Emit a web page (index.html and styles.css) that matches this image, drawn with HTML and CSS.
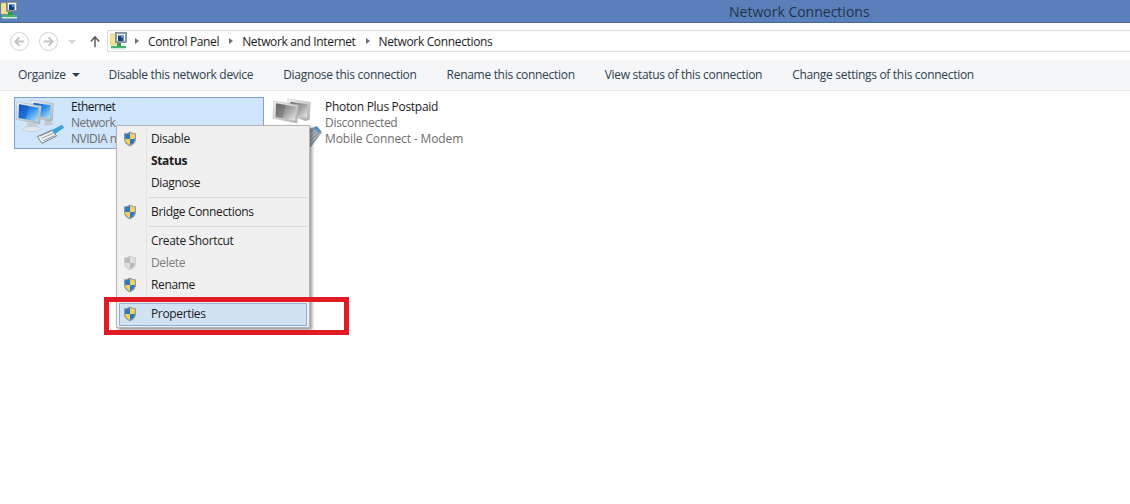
FILE: index.html
```html
<!DOCTYPE html>
<html lang="en">
<head>
<meta charset="utf-8">
<title>Network Connections</title>
<link rel="stylesheet" href="styles.css">
</head>
<body>
<svg class="defs" width="0" height="0" aria-hidden="true">
  <defs>
    <linearGradient id="gScreen" x1="0" y1="0" x2="1" y2="1">
      <stop offset="0" stop-color="#0f55c8"/>
      <stop offset=".5" stop-color="#2f8fea"/>
      <stop offset="1" stop-color="#c4e8fc"/>
    </linearGradient>
    <linearGradient id="gFrame" x1="0" y1="0" x2="1" y2="1">
      <stop offset="0" stop-color="#f4f6f8"/>
      <stop offset="1" stop-color="#a8b2ba"/>
    </linearGradient>
    <linearGradient id="gScreenGrey" x1="0" y1="0" x2="1" y2="1">
      <stop offset="0" stop-color="#6e6e6e"/>
      <stop offset=".55" stop-color="#a6a6a6"/>
      <stop offset="1" stop-color="#ececec"/>
    </linearGradient>
    <linearGradient id="gFrameGrey" x1="0" y1="0" x2="1" y2="1">
      <stop offset="0" stop-color="#f4f4f4"/>
      <stop offset="1" stop-color="#acacac"/>
    </linearGradient>
    <symbol id="shield" viewBox="0 0 14 16">
      <path d="M7 .5C5 1.800 3 2.300 1 2.300v5.500c0 3.600 2.400 6.200 6 7.700 3.600-1.500 6-4.100 6-7.700V2.300C11 2.300 9 1.800 7 .5z" fill="#8d9aa6"/>
      <path d="M7 1.800V8H2.200V3.300C3.800 3.200 5.500 2.800 7 1.800z" fill="#2f78bf"/>
      <path d="M7 1.800V8h4.800V3.300C10.200 3.200 8.500 2.800 7 1.800z" fill="#f2d35a"/>
      <path d="M2.200 8H7v6.100C4.200 12.800 2.300 10.800 2.200 8z" fill="#f2d35a"/>
      <path d="M11.800 8H7v6.100c2.800-1.300 4.700-3.300 4.800-6.100z" fill="#2f78bf"/>
    </symbol>
    <symbol id="shield-off" viewBox="0 0 14 16">
      <path d="M7 .5C5 1.800 3 2.300 1 2.300v5.500c0 3.600 2.400 6.200 6 7.700 3.600-1.500 6-4.100 6-7.700V2.300C11 2.300 9 1.800 7 .5z" fill="#cfcfcf"/>
      <path d="M7 1.800V8H2.200V3.300C3.800 3.200 5.500 2.800 7 1.800zM11.800 8H7v6.100c2.800-1.300 4.700-3.300 4.800-6.100z" fill="#b9b9b9"/>
      <path d="M7 1.800V8h4.800V3.300C10.200 3.200 8.500 2.800 7 1.800zM2.200 8H7v6.100C4.200 12.800 2.300 10.800 2.200 8z" fill="#dedede"/>
    </symbol>
    <symbol id="netfolder" viewBox="0 0 18 18">
      <path d="M0 2h7l1 1.500h2V13H0z" fill="#f4e596" stroke="#c9b766" stroke-width=".5"/>
      <rect x="5.500" y="0.500" width="11" height="10" fill="#8f9dab" stroke="#606c78" stroke-width=".6"/>
      <rect x="7" y="2" width="8" height="7" fill="#f2f4f6"/>
      <path d="M8 3.500h5.500V9H8z" fill="#123f7c"/>
      <path d="M11 3.500h2.500V6H11z" fill="#5a95d6"/>
      <rect x="7" y="11" width="4" height="3" fill="#2b9a55"/>
      <rect x="1" y="14" width="15" height="2" fill="#46b56f"/>
      <rect x="1" y="16" width="15" height="1.500" fill="#d4ecdb"/>
    </symbol>
  </defs>
</svg>

<header class="titlebar">
  <svg class="title-icon"><use href="#netfolder"/></svg>
  <span class="title-text">Network Connections</span>
</header>

<nav class="navbar">
  <button class="round-btn" aria-label="Back">
    <svg viewBox="0 0 18 18"><path d="M14 9H5M9 4.500L4.500 9 9 13.500" fill="none" stroke="#c4c4c4" stroke-width="2"/></svg>
  </button>
  <button class="round-btn" aria-label="Forward">
    <svg viewBox="0 0 18 18"><path d="M4 9h9M9 4.500L13.500 9 9 13.500" fill="none" stroke="#c4c4c4" stroke-width="2"/></svg>
  </button>
  <span class="recent-caret"></span>
  <svg class="up-arrow" viewBox="0 0 12 14"><path d="M6 14V2M1 7l5-5.500L11 7" fill="none" stroke="#565656" stroke-width="1.700"/></svg>
  <div class="address">
    <svg class="addr-icon"><use href="#netfolder"/></svg>
    <span class="crumb-sep"></span><span class="crumb">Control Panel</span>
    <span class="crumb-sep"></span><span class="crumb">Network and Internet</span>
    <span class="crumb-sep"></span><span class="crumb">Network Connections</span>
  </div>
</nav>

<div class="toolbar">
  <span class="tool organize">Organize <i class="caret"></i></span>
  <span class="tool">Disable this network device</span>
  <span class="tool">Diagnose this connection</span>
  <span class="tool">Rename this connection</span>
  <span class="tool">View status of this connection</span>
  <span class="tool">Change settings of this connection</span>
</div>

<main class="content">
  <div class="tile selected">
    <span class="tile-icon">
      <svg class="device" viewBox="0 0 168 162">
        <path d="M50 12l68 10-3 52-12 3-50-18z" fill="url(#gFrame)" stroke="#8c98a3"/>
        <path d="M58 20l52 8-2 40-50-12z" fill="url(#gScreen)"/>
        <path d="M92 76l22 2 4 9-28 2z" fill="#c2c9cf"/>
        <path d="M8 18l74 12-4 54L6 70z" fill="url(#gFrame)" stroke="#8c98a3"/>
        <path d="M15 25l60 10-3 42-58-11z" fill="url(#gScreen)"/>
        <path d="M15 25l30 5-10 39-21-3z" fill="#0d52bf" opacity=".5"/>
        <path d="M40 78l28 5 2 12H38z" fill="#c8ced3"/>
        <ellipse cx="54" cy="99" rx="26" ry="8" fill="#e4e7ea" stroke="#9aa3aa"/>
        <path d="M70 122l44-20 14 18-44 22z" fill="#f0f2f3" stroke="#5f676d" stroke-width="2.500"/>
        <path d="M78 120l34-15M83 127l34-15M88 134l34-15" stroke="#7a8389" stroke-width="2.500"/>
        <path d="M114 102l30-16 6 9-28 20z" fill="#3aa3dc"/>
      </svg>
    </span>
    <div class="tile-text">
      <div class="name">Ethernet</div>
      <div class="sub">Network</div>
      <div class="sub">NVIDIA n</div>
    </div>
  </div>
  <div class="tile">
    <span class="tile-icon">
      <svg class="device off" viewBox="0 0 168 162">
        <path d="M50 12l68 10-3 52-12 3-50-18z" fill="url(#gFrameGrey)" stroke="#9a9a9a"/>
        <path d="M58 20l52 8-2 40-50-12z" fill="url(#gScreenGrey)"/>
        <path d="M8 18l74 12-4 54L6 70z" fill="url(#gFrameGrey)" stroke="#9a9a9a"/>
        <path d="M15 25l60 10-3 42-58-11z" fill="url(#gScreenGrey)"/>
        <path d="M15 25l30 5-10 39-21-3z" fill="#555" opacity=".35"/>
        <path d="M108 104l28-10 17 18-33 44h-12z" fill="#8b98a4"/>
        <path d="M114 122l26-20M114 134l30-26M114 146l34-32" stroke="#c5ccd2" stroke-width="2.500"/>
        <path d="M128 98l10-4 12 14-6 6z" fill="#4a93c8"/>
      </svg>
    </span>
    <div class="tile-text">
      <div class="name">Photon Plus Postpaid</div>
      <div class="sub">Disconnected</div>
      <div class="sub modem">Mobile Connect - Modem</div>
    </div>
  </div>

  <ul class="menu">
    <li class="item"><svg class="shield"><use href="#shield"/></svg>Disable</li>
    <li class="item bold">Status</li>
    <li class="item">Diagnose</li>
    <li class="sep"></li>
    <li class="item"><svg class="shield"><use href="#shield"/></svg>Bridge Connections</li>
    <li class="sep"></li>
    <li class="item">Create Shortcut</li>
    <li class="item disabled"><svg class="shield"><use href="#shield-off"/></svg>Delete</li>
    <li class="item"><svg class="shield"><use href="#shield"/></svg>Rename</li>
    <li class="sep"></li>
    <li class="item active"><svg class="shield"><use href="#shield"/></svg>Properties</li>
  </ul>
  <div class="callout"></div>
</main>
</body>
</html>
```

FILE: styles.css
```css
* { box-sizing: border-box; }
html, body { margin: 0; height: 100%; }
body {
  background: #fff;
  font-family: "Open Sans", "Noto Sans", sans-serif;
  font-size: 12px;
  color: #1e1e1e;
  overflow: hidden;
}
.defs { position: absolute; }

.titlebar {
  height: 23px;
  background: #5b7fba;
  border-bottom: 1px solid #4a6690;
  display: flex;
  align-items: center;
  position: relative;
}
.title-icon { width: 18px; height: 18px; margin-left: 1px; margin-top: -3px; }
.title-text {
  position: absolute;
  left: 729px;
  top: 2px;
  font-size: 14px;
  color: #23324a;
}

.navbar {
  height: 37px;
  display: flex;
  align-items: center;
  padding-left: 10px;
}
.round-btn {
  width: 19px;
  height: 19px;
  padding: 0;
  border: 1px solid #d2d2d2;
  border-radius: 50%;
  background: #fff;
  margin-right: 10px;
  display: flex;
}
.round-btn svg { width: 17px; height: 17px; }
.recent-caret {
  width: 0; height: 0;
  margin-top: 1px;
  border: 4px solid transparent;
  border-top: 4px solid #d4d4d4;
  border-bottom: 0;
}
.up-arrow { width: 10px; height: 13px; margin-left: 14px; }
.address {
  margin-left: 7px;
  flex: 1;
  height: 22px;
  margin-top: -1px;
  border: 1px solid #dcdcdc;
  border-right: 0;
  display: flex;
  align-items: center;
  padding-left: 2px;
}
.addr-icon { width: 18px; height: 18px; margin-right: 7px; }
.crumb-sep {
  width: 0; height: 0;
  margin-right: 9px;
  border: 3.500px solid transparent;
  border-left: 4px solid #6e6e6e;
  border-right: 0;
}
.crumb { margin-right: 10px; letter-spacing: -.35px; color: #222; }

.toolbar {
  height: 31px;
  padding-bottom: 2px;
  background: #f5f6f7;
  border-bottom: 1px solid #e8e9ea;
  display: flex;
  align-items: center;
  padding-left: 18px;
  gap: 30px;
  color: #2c3e50;
}
.tool { letter-spacing: -.3px; white-space: nowrap; }
.organize { margin-right: -1px; }
.caret {
  display: inline-block;
  width: 0; height: 0;
  margin: 0 0 2px 3px;
  border: 4px solid transparent;
  border-top: 4px solid #2c3e50;
  border-bottom: 0;
}

.content {
  position: relative;
  display: flex;
  padding: 6px 0 0 14px;
  gap: 4px;
}
.tile {
  width: 250px;
  height: 52px;
  display: flex;
  border: 1px solid transparent;
  line-height: 16px;
}
.tile.selected { background: #cfe5fb; border-color: #7da2ce; }
.tile-icon { width: 56px; flex: none; }
.device { display: block; width: 56px; height: 54px; margin: -2px 0 0 -1px; }
.device.off { margin: -3px 0 0 2px; }
.tile-text { padding-top: 1px; white-space: nowrap; overflow: hidden; letter-spacing: -.3px; }
.selected .tile-text { letter-spacing: -.5px; }
.name { color: #1a1a1a; }
.sub { color: #6d6d6d; }
.modem { letter-spacing: -.12px; }

.menu {
  position: absolute;
  left: 116px;
  top: 34px;
  width: 194px;
  height: 203px;
  margin: 0;
  padding: 2px;
  list-style: none;
  background: linear-gradient(to right, #f0f0f0 29px, #e3e3e3 29px, #e3e3e3 30px, #f0f0f0 30px);
  border: 1px solid #b5b5b5;
  box-shadow: 2px 2px 3px rgba(70, 70, 70, .55);
}
.item {
  position: relative;
  height: 22px;
  line-height: 21px;
  padding-left: 32px;
  letter-spacing: -.35px;
  color: #1c1c1c;
}
.bold { font-weight: 700; }
.disabled { color: #7d7d7d; }
.sep { height: 1px; margin: 3px 0 3px 30px; background: #d7d7d7; }
.active {
  background: #d1e2f2;
  border: 1px solid #8fb0d2;
  padding-left: 31px;
  line-height: 19px;
  margin-top: 3px;
  height: 23px;
}
.shield { position: absolute; left: 4px; top: 3px; width: 14px; height: 16px; }
.active .shield { left: 3px; top: 2px; }

.callout {
  position: absolute;
  left: 104px;
  top: 206px;
  width: 245px;
  height: 38px;
  border: 5px solid #e01b24;
}
```
